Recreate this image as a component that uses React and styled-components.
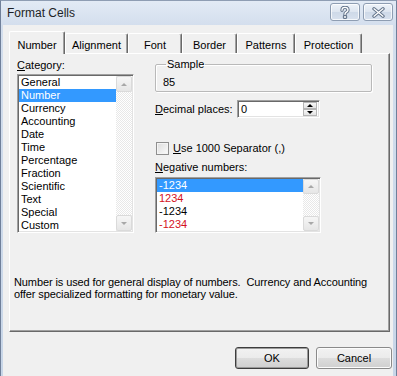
import React from 'react';
import styled, { createGlobalStyle } from 'styled-components';

const Global = createGlobalStyle`
  html, body { margin: 0; padding: 0; background: #fff; }
  body { font-family: "Liberation Sans", Arial, sans-serif; font-size: 11px; color: #000; }
  #root { width: 397px; height: 376px; overflow: hidden; }
  * { box-sizing: border-box; }
`;

const Window = styled.div`
  width: 397px;
  height: 376px;
  display: flex;
  flex-direction: column;
  background: linear-gradient(180deg, #e2eaf5 0px, #d3deed 25px, #c8d6e8 100%);
  border-left: 1px solid #70809a;
  border-right: 1px solid #70809a;
  border-top: 1px solid #8e9db3;
`;

const TitleBar = styled.div`
  height: 24px;
  display: flex;
  align-items: center;
  padding: 0 3px 0 6px;
`;

const Title = styled.div`
  flex: 1;
  font-size: 12px;
  color: #1c1f26;
  padding-bottom: 1px;
`;

const CaptionButtons = styled.div`
  display: flex;
  gap: 3px;
  align-self: flex-start;
  margin-top: 2px;
`;

const CaptionButton = styled.div`
  width: 30px;
  height: 18px;
  border: 1px solid #8e9db2;
  border-radius: 3px;
  background: linear-gradient(180deg, #eef3f9 0%, #dde5f0 50%, #ced9e8 51%, #d8e1ee 100%);
  box-shadow: inset 0 0 0 1px rgba(255,255,255,0.75);
  display: flex;
  align-items: center;
  justify-content: center;
`;

const Client = styled.div`
  flex: 1;
  margin: 0 3px 0 2px;
  background: #f0f0f0;
  padding: 6px 3px 0 6px;
  display: flex;
  flex-direction: column;
`;

const TabStrip = styled.div`
  display: flex;
  align-items: flex-end;
  height: 23px;
  margin-bottom: -1px;
  position: relative;
  z-index: 1;
`;

const Tab = styled.div`
  width: ${p => p.$w}px;
  height: ${p => (p.$active ? 23 : 20)}px;
  margin-bottom: ${p => (p.$active ? 0 : 1)}px;
  background: #f0f0f0;
  border-top: 1px solid #fff;
  border-left: 1px solid #fff;
  border-right: 1px solid #696969;
  box-shadow: inset -1px 0 0 #a0a0a0;
  border-radius: 2px 2px 0 0;
  display: flex;
  justify-content: center;
  align-items: flex-start;
  padding-top: ${p => (p.$active ? 7 : 5)}px;
  line-height: 13px;
  white-space: nowrap;
`;

const Panel = styled.div`
  width: 381px;
  height: 279px;
  border-top: 1px solid #fff;
  border-left: 1px solid #fff;
  border-right: 1px solid #696969;
  border-bottom: 1px solid #696969;
  box-shadow: inset -1px -1px 0 #a0a0a0;
  padding: 5px 0 0 4px;
  display: flex;
  flex-direction: column;
`;

const TopGrid = styled.div`
  display: grid;
  grid-template-columns: 117px 1fr;
  column-gap: 21px;
  margin-left: 3px;
`;

const Column = styled.div`
  display: flex;
  flex-direction: column;
`;

const Label = styled.div`
  line-height: 13px;
  height: 13px;
  white-space: nowrap;
  margin-top: ${p => p.$mt || 0}px;
  margin-bottom: ${p => p.$mb || 0}px;
`;

const ListBox = styled.div`
  width: ${p => p.$w}px;
  height: ${p => p.$h}px;
  margin-top: ${p => p.$mt || 0}px;
  background: #fff;
  border: 1px solid;
  border-color: #a0a0a0 #fff #fff #a0a0a0;
  box-shadow: inset 1px 1px 0 #696969, inset -1px -1px 0 #e3e3e3;
  padding: 1px;
  display: flex;
`;

const Items = styled.div`
  flex: 1;
  display: flex;
  flex-direction: column;
  min-width: 0;
`;

const Item = styled.div`
  height: 13px;
  line-height: 13px;
  padding-left: 2px;
  white-space: nowrap;
  background: ${p => (p.$sel ? '#3399ff' : 'transparent')};
  color: ${p => (p.$sel ? '#fff' : p.$red ? '#d4111e' : '#000')};
`;

const ScrollBar = styled.div`
  width: 16px;
  display: flex;
  flex-direction: column;
  justify-content: space-between;
  background: repeating-conic-gradient(#ffffff 0 25%, #e8e8e8 0 50%) 0 0 / 2px 2px;
`;

const ScrollButton = styled.div`
  width: 16px;
  height: ${p => p.$h || 16}px;
  background: linear-gradient(180deg, #f6f6f6, #e6e6e6);
  border: 1px solid #dadada;
  border-radius: 2px;
  display: flex;
  align-items: center;
  justify-content: center;
`;

const Arrow = styled.div`
  width: 0;
  height: 0;
  border-left: 3px solid transparent;
  border-right: 3px solid transparent;
  ${p => (p.$down ? 'border-top: 3px solid' : 'border-bottom: 3px solid')} ${p => p.$color || '#a8a8a8'};
`;

const GroupBox = styled.fieldset`
  width: 217px;
  margin: -1px 0 0 0;
  padding: 5px 0 2px 7px;
  border: 1px solid #b9b9b9;
  border-radius: 2px;
  box-shadow: inset 1px 1px 0 #fff, 1px 1px 0 #fff;
  min-inline-size: 0;
`;

const Legend = styled.legend`
  padding: 0 1px;
  margin-left: 3px;
  line-height: 13px;
`;

const SampleValue = styled.div`
  line-height: 13px;
`;

const Row = styled.div`
  display: flex;
  align-items: center;
  margin-top: ${p => p.$mt || 0}px;
`;

const FieldLabel = styled.div`
  width: 82px;
  line-height: 13px;
  white-space: nowrap;
`;

const NumInput = styled.div`
  width: 83px;
  height: 18px;
  background: #fff;
  border: 1px solid;
  border-color: #a0a0a0 #fff #fff #a0a0a0;
  box-shadow: inset 1px 1px 0 #696969, inset -1px -1px 0 #e3e3e3;
  display: flex;
  align-items: center;
  padding: 1px 2px 1px 2px;
`;

const InputText = styled.div`
  flex: 1;
  line-height: 13px;
  padding-left: 1px;
`;

const Spinner = styled.div`
  width: 14px;
  height: 14px;
  display: flex;
  flex-direction: column;
`;

const SpinButton = styled.div`
  flex: 1;
  background: linear-gradient(180deg, #f7f7f7, #e3e3e3);
  border: 1px solid #b5b5b5;
  display: flex;
  align-items: center;
  justify-content: center;
`;

const CheckBox = styled.div`
  width: 13px;
  height: 13px;
  margin-left: 1px;
  border: 1px solid #8f8f8f;
  background: linear-gradient(135deg, #dcdcdc, #fbfbfb);
  box-shadow: inset 0 0 0 1px #f4f4f4;
`;

const CheckLabel = styled.div`
  margin-left: 4px;
  line-height: 13px;
`;

const Description = styled.div`
  margin-top: 43px;
  line-height: 12px;
  width: 370px;
  letter-spacing: -0.1px;
`;

const Footer = styled.div`
  display: flex;
  justify-content: flex-end;
  gap: 7px;
  margin-top: 15px;
  margin-right: -2px;
`;

const Button = styled.div`
  width: ${p => p.$w}px;
  height: 22px;
  border: 1px solid ${p => (p.$default ? '#3d3d3d' : '#8a8a8a')};
  border-radius: 3px;
  background: linear-gradient(180deg, #f2f2f2 0%, #ebebeb 50%, #dddddd 51%, #cfcfcf 100%);
  box-shadow: inset 0 0 0 1px ${p => (p.$default ? '#9a9a9a' : '#fcfcfc')};
  display: flex;
  align-items: center;
  justify-content: center;
  line-height: 13px;
`;

const HelpIcon = () => (
  <svg width="12" height="13" viewBox="0 0 12 13">
    <path d="M3 4.3 C3 1.8 4.5 1.3 6 1.3 C7.8 1.3 9 2.2 9 3.9 C9 5.4 7.9 5.8 7 6.4 C6.3 6.9 6 7.3 6 8.4" fill="none" stroke="#66768c" strokeWidth="3.4" strokeLinecap="round" />
    <path d="M3 4.3 C3 1.8 4.5 1.3 6 1.3 C7.8 1.3 9 2.2 9 3.9 C9 5.4 7.9 5.8 7 6.4 C6.3 6.9 6 7.3 6 8.4" fill="none" stroke="#fff" strokeWidth="1.3" strokeLinecap="round" />
    <rect x="4.4" y="9.6" width="3.2" height="2.8" rx="0.6" fill="#fff" stroke="#66768c" strokeWidth="1.1" />
  </svg>
);

const CloseIcon = () => (
  <svg width="13" height="11" viewBox="0 0 13 11">
    <path d="M2 1.8 L11 9.2 M11 1.8 L2 9.2" fill="none" stroke="#66768c" strokeWidth="3.4" strokeLinecap="round" />
    <path d="M2 1.8 L11 9.2 M11 1.8 L2 9.2" fill="none" stroke="#fff" strokeWidth="1.3" strokeLinecap="round" />
  </svg>
);

const tabs = [
  { label: 'Number', w: 56, active: true },
  { label: 'Alignment', w: 63 },
  { label: 'Font', w: 54 },
  { label: 'Border', w: 55 },
  { label: 'Patterns', w: 58 },
  { label: 'Protection', w: 67 },
];

const categories = [
  'General', 'Number', 'Currency', 'Accounting', 'Date', 'Time',
  'Percentage', 'Fraction', 'Scientific', 'Text', 'Special', 'Custom',
];

const negatives = [
  { v: '-1234', sel: true },
  { v: '1234', red: true },
  { v: '-1234' },
  { v: '-1234', red: true },
];

export default function App() {
  return (
    <>
      <Global />
      <Window>
        <TitleBar>
          <Title>Format Cells</Title>
          <CaptionButtons>
            <CaptionButton><HelpIcon /></CaptionButton>
            <CaptionButton><CloseIcon /></CaptionButton>
          </CaptionButtons>
        </TitleBar>
        <Client>
          <TabStrip>
            {tabs.map(t => (
              <Tab key={t.label} $w={t.w} $active={t.active}>{t.label}</Tab>
            ))}
          </TabStrip>
          <Panel>
            <TopGrid>
              <Column>
                <Label $mb={2}><u>C</u>ategory:</Label>
                <ListBox $w={117} $h={159}>
                  <Items>
                    {categories.map(c => (
                      <Item key={c} $sel={c === 'Number'}>{c}</Item>
                    ))}
                  </Items>
                  <ScrollBar>
                    <ScrollButton><Arrow /></ScrollButton>
                    <ScrollButton><Arrow $down /></ScrollButton>
                  </ScrollBar>
                </ListBox>
              </Column>
              <Column>
                <GroupBox>
                  <Legend>Sample</Legend>
                  <SampleValue>85</SampleValue>
                </GroupBox>
                <Row $mt={8}>
                  <FieldLabel><u>D</u>ecimal places:</FieldLabel>
                  <NumInput>
                    <InputText>0</InputText>
                    <Spinner>
                      <SpinButton><Arrow $color="#000" /></SpinButton>
                      <SpinButton><Arrow $down $color="#000" /></SpinButton>
                    </Spinner>
                  </NumInput>
                </Row>
                <Row $mt={24}>
                  <CheckBox />
                  <CheckLabel><u>U</u>se 1000 Separator (,)</CheckLabel>
                </Row>
                <Label $mt={6}><u>N</u>egative numbers:</Label>
                <ListBox $w={166} $h={56} $mt={3}>
                  <Items>
                    {negatives.map((n, i) => (
                      <Item key={i} $sel={n.sel} $red={n.red}>{n.v}</Item>
                    ))}
                  </Items>
                  <ScrollBar>
                    <ScrollButton $h={15}><Arrow /></ScrollButton>
                    <ScrollButton $h={15}><Arrow $down /></ScrollButton>
                  </ScrollBar>
                </ListBox>
              </Column>
            </TopGrid>
            <Description>
              Number is used for general display of numbers.&nbsp; Currency and Accounting offer specialized formatting for monetary value.
            </Description>
          </Panel>
          <Footer>
            <Button $w={74} $default>OK</Button>
            <Button $w={76}>Cancel</Button>
          </Footer>
        </Client>
      </Window>
    </>
  );
}
